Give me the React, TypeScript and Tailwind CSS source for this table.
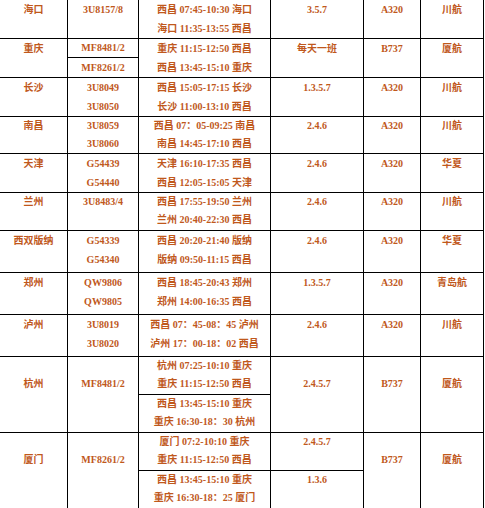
import React from 'react';

type Line = string;

const cell = 'border-r border-b border-black p-0 align-top text-center';

function Lines({ lines }: { lines: Line[] }) {
  return (
    <>
      {lines.map((l, i) => (
        <div key={i} className="whitespace-nowrap">
          {l}
        </div>
      ))}
    </>
  );
}

// simple two-line rows: city, flights, routes, days, plane, airline
const simpleRows = [
  { city: '长沙', flights: ['3U8049', '3U8050'], routes: ['西昌 15:05-17:15 长沙', '长沙 11:00-13:10 西昌'], days: '1.3.5.7', plane: 'A320', airline: '川航', h: 'h-[39px]' },
  { city: '南昌', flights: ['3U8059', '3U8060'], routes: ['西昌 07：05-09:25 南昌', '南昌 14:45-17:10 西昌'], days: '2.4.6', plane: 'A320', airline: '川航', h: 'h-[37px] leading-[18px]' },
  { city: '天津', flights: ['G54439', 'G54440'], routes: ['天津 16:10-17:35 西昌', '西昌 12:05-15:05 天津'], days: '2.4.6', plane: 'A320', airline: '华夏', h: 'h-[39px]' },
  { city: '兰州', flights: ['3U8483/4'], routes: ['西昌 17:55-19:50 兰州', '兰州 20:40-22:30 西昌'], days: '2.4.6', plane: 'A320', airline: '川航', h: 'h-[38px] leading-[18px]' },
  { city: '西双版纳', flights: ['G54339', 'G54340'], routes: ['西昌 20:20-21:40 版纳', '版纳 09:50-11:15 西昌'], days: '2.4.6', plane: 'A320', airline: '华夏', h: 'h-[42px]' },
  { city: '郑州', flights: ['QW9806', 'QW9805'], routes: ['西昌 18:45-20:43 郑州', '郑州 14:00-16:35 西昌'], days: '1.3.5.7', plane: 'A320', airline: '青岛航', h: 'h-[42px]' },
  { city: '泸州', flights: ['3U8019', '3U8020'], routes: ['西昌 07：45-08：45 泸州', '泸州 17：00-18：02 西昌'], days: '2.4.6', plane: 'A320', airline: '川航', h: 'h-[42px]' },
];

export default function App() {
  return (
    <div className="w-[485px] h-[508px] overflow-hidden bg-white">
      <table
        className="table-fixed border-separate border-spacing-0 w-[484px] text-[10px] leading-[19px] font-bold text-[#c0581c]"
        style={{ fontFamily: '"Liberation Serif", "Noto Sans CJK SC", serif' }}
      >
        <colgroup>
          <col className="w-[68px]" />
          <col className="w-[71px]" />
          <col className="w-[132px]" />
          <col className="w-[93px]" />
          <col className="w-[57px]" />
          <col className="w-[63px]" />
        </colgroup>
        <tbody>
          {/* 海口 */}
          <tr className="h-[39px]">
            <td className={cell}>海口</td>
            <td className={cell}>3U8157/8</td>
            <td className={cell}>
              <Lines lines={['西昌 07:45-10:30 海口', '海口 11:35-13:55 西昌']} />
            </td>
            <td className={cell}>3.5.7</td>
            <td className={cell}>A320</td>
            <td className={cell}>川航</td>
          </tr>

          {/* 重庆 */}
          <tr className="h-[19px]">
            <td rowSpan={2} className={cell}>重庆</td>
            <td className={`${cell} leading-[18px]`}>MF8481/2</td>
            <td rowSpan={2} className={cell}>
              <Lines lines={['重庆 11:15-12:50 西昌', '西昌 13:45-15:10 重庆']} />
            </td>
            <td rowSpan={2} className={cell}>每天一班</td>
            <td rowSpan={2} className={cell}>B737</td>
            <td rowSpan={2} className={cell}>厦航</td>
          </tr>
          <tr className="h-[20px]">
            <td className={`${cell} leading-[19px]`}>MF8261/2</td>
          </tr>

          {simpleRows.map((r) => (
            <tr key={r.city} className={r.h}>
              <td className={cell}>{r.city}</td>
              <td className={cell}>
                <Lines lines={r.flights} />
              </td>
              <td className={cell}>
                <Lines lines={r.routes} />
              </td>
              <td className={cell}>{r.days}</td>
              <td className={cell}>{r.plane}</td>
              <td className={cell}>{r.airline}</td>
            </tr>
          ))}

          {/* 杭州 */}
          <tr className="h-[38px] leading-[18px]">
            <td rowSpan={2} className={`${cell} pt-[18px]`}>杭州</td>
            <td rowSpan={2} className={`${cell} pt-[18px]`}>MF8481/2</td>
            <td className={cell}>
              <Lines lines={['杭州 07:25-10:10 重庆', '重庆 11:15-12:50 西昌']} />
            </td>
            <td rowSpan={2} className={`${cell} pt-[18px]`}>2.4.5.7</td>
            <td rowSpan={2} className={`${cell} pt-[18px]`}>B737</td>
            <td rowSpan={2} className={`${cell} pt-[18px]`}>厦航</td>
          </tr>
          <tr className="h-[38px] leading-[18px]">
            <td className={cell}>
              <Lines lines={['西昌 13:45-15:10 重庆', '重庆 16:30-18：30 杭州']} />
            </td>
          </tr>

          {/* 厦门 */}
          <tr className="h-[38px] leading-[18px]">
            <td rowSpan={2} className={`${cell} pt-[18px]`}>厦门</td>
            <td rowSpan={2} className={`${cell} pt-[18px]`}>MF8261/2</td>
            <td className={cell}>
              <Lines lines={['厦门 07:2-10:10 重庆', '重庆 11:15-12:50 西昌']} />
            </td>
            <td className={cell}>2.4.5.7</td>
            <td rowSpan={2} className={`${cell} pt-[18px]`}>B737</td>
            <td rowSpan={2} className={`${cell} pt-[18px]`}>厦航</td>
          </tr>
          <tr className="h-[38px] leading-[18px]">
            <td className={cell}>
              <Lines lines={['西昌 13:45-15:10 重庆', '重庆 16:30-18：25 厦门']} />
            </td>
            <td className={cell}>1.3.6</td>
          </tr>
        </tbody>
      </table>
    </div>
  );
}
